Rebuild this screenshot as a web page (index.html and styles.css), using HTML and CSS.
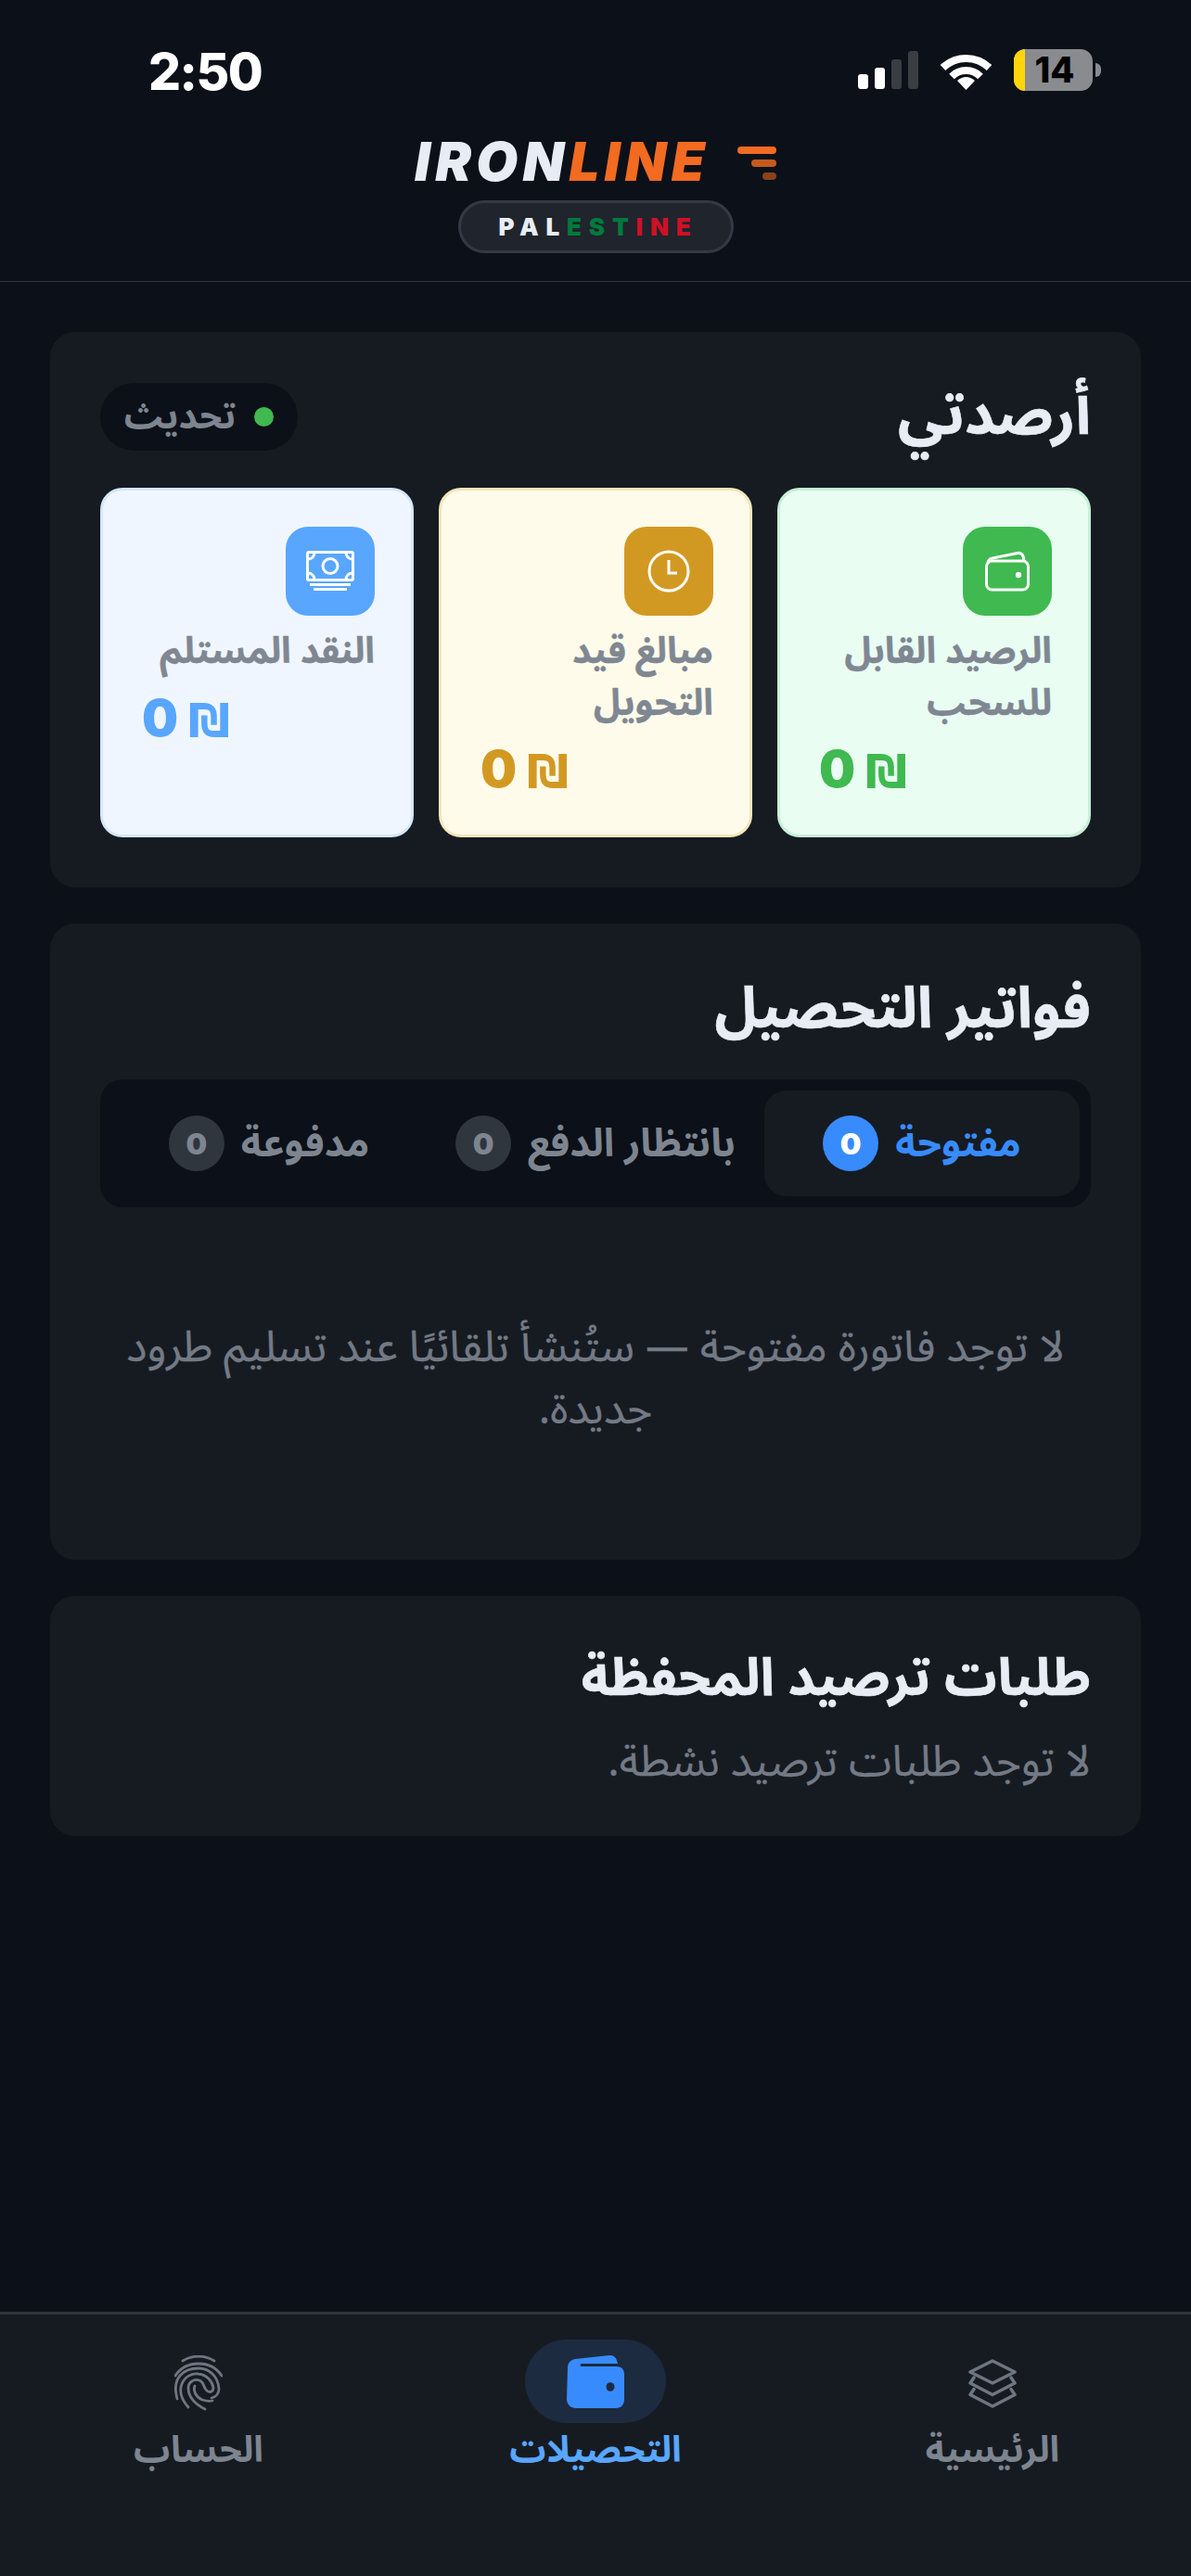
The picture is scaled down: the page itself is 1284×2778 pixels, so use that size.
FILE: index.html
```html
<!DOCTYPE html>
<html lang="ar" dir="rtl">
<head>
<meta charset="utf-8">
<title>Ironline</title>
<link rel="stylesheet" href="styles.css">
</head>
<body>
<div class="app">
  <div class="status" dir="ltr">
    <div class="time">2:50</div>
    <div class="status-icons">
      <div class="signal"><i class="b1"></i><i class="b2"></i><i class="b3"></i><i class="b4"></i></div>
      <svg class="wifi" width="57" height="42" viewBox="0 0 57 42"><path d="M3.5 18A36 36 0 0 1 53.500 18M13 27.500A22 22 0 0 1 44 27.500" fill="none" stroke="#fff" stroke-width="8"/><path d="M28.500 42L19 32Q28.500 24 38 32Z" fill="#fff"/></svg>
      <div class="battery"><span class="batt-fill"></span><span class="batt-num">14</span><span class="batt-nub"></span></div>
    </div>
  </div>
  <header class="brand" dir="ltr">
    <div class="logo">
      <div class="logo-text"><span class="iron">IRON</span><span class="line">LINE</span></div>
      <div class="logo-bars"><i class="lb1"></i><i class="lb2"></i><i class="lb3"></i></div>
    </div>
    <div class="country"><span class="c-w">PAL</span><span class="c-g">EST</span><span class="c-r">INE</span></div>
  </header>
  <main class="content">
    <section class="card">
      <div class="card-head">
        <h2 class="title">أرصدتي</h2>
        <div class="refresh"><span class="dot"></span><span class="refresh-text">تحديث</span></div>
      </div>
      <div class="balances">
        <div class="bal bal-green">
          <div class="bal-icon">
            <svg width="48" height="44" viewBox="0 0 48 44" fill="none" stroke="#fff" stroke-width="3" stroke-linejoin="round"><rect x="1.500" y="11" width="45" height="31" rx="6"/><path d="M3 14C3 10 5 8.500 8 8L35 2.500C39 1.800 41.500 4 42 11"/><circle cx="36" cy="26" r="3.200" fill="#fff" stroke="none"/></svg>
          </div>
          <div class="bal-label">الرصيد القابل للسحب</div>
          <div class="bal-amount" dir="ltr">0 <span class="shekel">₪</span></div>
        </div>
        <div class="bal bal-gold">
          <div class="bal-icon">
            <svg width="46" height="46" viewBox="0 0 46 46" fill="none" stroke="#fff" stroke-width="3"><circle cx="23" cy="23" r="21"/><path d="M23 11V25H32"/></svg>
          </div>
          <div class="bal-label">مبالغ قيد التحويل</div>
          <div class="bal-amount" dir="ltr">0 <span class="shekel">₪</span></div>
        </div>
        <div class="bal bal-blue">
          <div class="bal-icon">
            <svg width="52" height="44" viewBox="0 0 52 44" fill="none" stroke="#fff" stroke-width="3"><rect x="1.500" y="1.500" width="49" height="30" rx="1.500"/><circle cx="26" cy="16.500" r="8"/><path d="M9 2C9 6 6 9 2 9M43 2C43 6 46 9 50 9M9 31C9 27 6 24 2 24M43 31C43 27 46 24 50 24M4 36.500H48M8 41.500H44"/></svg>
          </div>
          <div class="bal-label">النقد المستلم</div>
          <div class="bal-amount" dir="ltr">0 <span class="shekel">₪</span></div>
        </div>
      </div>
    </section>

    <section class="card">
      <h2 class="title title-b">فواتير التحصيل</h2>
      <div class="tabs">
        <div class="tab tab-active"><span>مفتوحة</span><b class="count">0</b></div>
        <div class="tab"><span>بانتظار الدفع</span><b class="count">0</b></div>
        <div class="tab"><span>مدفوعة</span><b class="count">0</b></div>
      </div>
      <p class="empty">لا توجد فاتورة مفتوحة — ستُنشأ تلقائيًا عند تسليم طرود جديدة.</p>
    </section>

    <section class="card">
      <h2 class="title title-c">طلبات ترصيد المحفظة</h2>
      <p class="sub">لا توجد طلبات ترصيد نشطة.</p>
    </section>
  </main>
  <nav class="nav">
    <div class="nav-item">
      <div class="nav-icon">
        <svg width="52" height="53" viewBox="0 0 52 53" fill="none" stroke="#6e7681" stroke-width="3.500" stroke-linejoin="round" stroke-linecap="round"><path d="M26 2L50 14L26 26L2 14Z"/><path d="M6 20L2 26L26 38.500L50 26L46 20"/><path d="M6 32.500L2 38.500L26 51L50 38.500L46 32.500"/></svg>
      </div>
      <span>الرئيسية</span>
    </div>
    <div class="nav-item nav-active">
      <div class="nav-icon">
        <svg width="64" height="57" viewBox="0 0 64 57"><path d="M2 14C2 8 5 5 10 4L47 0C52 -.5 55 3 56 9H17C15 9 15 12 17 12H54C60 12 63 15 63 21V47C63 53 60 57 54 57H11C5 57 1 53 1 47Z" fill="#388bfd"/><ellipse cx="48" cy="34" rx="4.500" ry="4.800" fill="#1c2b40"/></svg>
      </div>
      <span>التحصيلات</span>
    </div>
    <div class="nav-item">
      <div class="nav-icon">
        <svg width="52" height="60" viewBox="0 0 52 60" fill="none" stroke="#6e7681" stroke-width="2.800" stroke-linecap="round"><path d="M9 6C19 -.5 33 -.5 43 6"/><path d="M1 22C7 13 16 9 26 9C36 9 45 13 51 22"/><path d="M3 47C0 36 1 28 6 22C11 16 19 14 26 14C37 14 47 22 48 36C48 41 45 45 40 46"/><path d="M15 56C8 48 5 39 8 31C11 23 19 19 26 20C35 21 41 28 42 35C42 40 37 41 34 37C31 33 32 29 27 27C21 25 15 29 15 35C15 45 23 53 33 58"/><path d="M22 33C20 38 23 45 30 48C33 49 37 50 41 49"/></svg>
      </div>
      <span>الحساب</span>
    </div>
  </nav>
</div>
</body>
</html>
```
FILE: styles.css
```css
* { box-sizing: border-box; }
html, body { margin: 0; padding: 0; background: #0d1117; }
body { font-family: "Noto Sans Arabic", "IBM Plex Sans Arabic", "DejaVu Sans", sans-serif; color: #e6edf3; }
.app { width: 1284px; height: 2778px; display: flex; flex-direction: column; background: #0c1018; overflow: hidden; }

.status { height: 125px; display: flex; justify-content: space-between; align-items: flex-start; padding: 0 106px 0 160px; flex: none; }
.time { font-family: Inter, sans-serif; font-weight: 800; font-size: 55px; line-height: 40px; margin-top: 57px; color: #fff; letter-spacing: -1.500px; }
.status-icons { display: flex; align-items: flex-start; margin-top: 53px; gap: 23px; }
.signal { display: flex; align-items: flex-end; gap: 7px; height: 43px; }
.signal i { display: block; width: 11px; border-radius: 3px; background: #fff; }
.signal .b1 { height: 16px; }
.signal .b2 { height: 23px; }
.signal .b3 { height: 32px; background: #3a3d42; }
.signal .b4 { height: 41px; background: #3a3d42; }
.wifi { margin-top: 2px; }
.battery { position: relative; width: 85px; height: 45px; border-radius: 13px; background: #8a8b8f; overflow: visible; display: flex; align-items: center; justify-content: center; }
.batt-fill { position: absolute; inset: 0 auto 0 0; width: 12px; background: #ffd60a; border-radius: 13px 0 0 13px; }
.batt-num { position: relative; font-family: Inter, sans-serif; font-weight: 800; font-size: 38px; line-height: 45px; color: #000; padding-left: 3px; }
.batt-nub { position: absolute; left: 88px; top: 15px; width: 6px; height: 15px; background: #8a8b8f; border-radius: 0 8px 8px 0; }

.brand { flex: none; height: 179px; border-bottom: 1px solid #2f343d; display: flex; flex-direction: column; align-items: center; }
.logo { display: flex; align-items: flex-start; gap: 30px; height: 91px; padding-top: 19px; }
.logo-text { font-family: Inter, sans-serif; font-weight: 900; font-style: italic; font-size: 58px; line-height: 60px; letter-spacing: 5.300px; }
.iron { color: #e8edf5; }
.line { color: #f26b21; }
.logo-bars { display: flex; flex-direction: column; align-items: flex-end; gap: 6px; margin-top: 14px; width: 42px; }
.logo-bars i { display: block; height: 8px; border-radius: 4px; background: #f26b21; }
.lb1 { width: 42px; }
.lb2 { width: 27px; opacity: .8; }
.lb3 { width: 15px; opacity: .55; }
.country { width: 297px; height: 57px; border: 3px solid #343a44; border-radius: 29px; background: #20242c; text-align: center; font-family: Inter, sans-serif; font-weight: 900; font-size: 26px; line-height: 51px; letter-spacing: 7.800px; padding-left: 6px; }
.c-w { color: #e8edf5; }
.c-g { color: #007a3d; }
.c-r { color: #ce1126; }

.content { flex: 1; padding: 54px 54px 0; display: flex; flex-direction: column; gap: 39px; }
.card { background: #161b22; border-radius: 27px; padding: 54px; }
.card-head { display: flex; justify-content: space-between; align-items: center; height: 74px; margin-bottom: 40px; }
.title { margin: 0; font-size: 62px; font-weight: 700; color: #e8edf5; line-height: 74px; -webkit-text-stroke: .6px #e8edf5; }
.title-b { font-size: 61.300px; line-height: 78px; margin-bottom: 36px; }
.title-c { font-size: 56.300px; line-height: 72px; margin-bottom: 27px; }
.refresh { height: 73px; width: 213px; border-radius: 37px; background: #0c1018; display: flex; align-items: center; justify-content: center; gap: 20px; color: #7d8590; font-size: 39px; font-weight: 700; }
.dot { width: 21px; height: 21px; border-radius: 50%; background: #3fb950; }

.balances { display: grid; grid-template-columns: repeat(3, 1fr); gap: 27px; }
.bal { border: 3px solid; border-radius: 24px; padding: 39px; height: 377px; }
.bal-icon { width: 96px; height: 96px; border-radius: 24px; display: flex; align-items: center; justify-content: center; margin-bottom: 11px; }
.bal-label { color: #7f8792; font-size: 39px; font-weight: 700; line-height: 55.600px; -webkit-text-stroke: .4px #7f8792; }
.bal-amount { font-family: Inter, "DejaVu Sans", sans-serif; font-weight: 900; font-size: 55px; line-height: 66px; margin-top: 10px; text-align: left; padding-left: 3px; }
.shekel { font-family: "DejaVu Sans", sans-serif; font-weight: 700; font-size: 50px; }
.bal-green { background: #e9fdf2; border-color: #c6f0d6; }
.bal-green .bal-icon { background: #3fb950; }
.bal-green .bal-amount { color: #3fb950; }
.bal-gold { background: #fffbeb; border-color: #f5e6bb; }
.bal-gold .bal-icon { background: #d29922; }
.bal-gold .bal-amount { color: #d29922; }
.bal-blue { background: #f0f6ff; border-color: #d6e6ff; }
.bal-blue .bal-icon { background: #58a6ff; }
.bal-blue .bal-amount { color: #58a6ff; }

.tabs { height: 138px; padding: 12px; border-radius: 24px; background: #0c1018; display: grid; grid-template-columns: repeat(3, 1fr); gap: 12px; }
.tab { display: flex; align-items: center; justify-content: center; gap: 18px; border-radius: 24px; color: #7d8590; font-size: 42px; font-weight: 700; }
.tab-active { background: #161b22; color: #388bfd; }
.count { width: 60px; height: 60px; border-radius: 50%; background: #30363d; color: #7d8590; display: flex; align-items: center; justify-content: center; font-family: Inter, sans-serif; font-weight: 900; font-size: 32px; }
.tab-active .count { background: #388bfd; color: #fff; }

.empty { margin: 118px 0 74px; text-align: center; color: #737a85; font-size: 46.600px; line-height: 67px; -webkit-text-stroke: .3px #737a85; }
.sub { margin: 0; color: #737a85; font-size: 46.600px; line-height: 52px; -webkit-text-stroke: .3px #737a85; }

.nav { flex: none; height: 285px; background: #161b22; border-top: 3px solid #2f343d; display: grid; grid-template-columns: repeat(3, 1fr); padding-top: 27px; }
.nav-item { display: flex; flex-direction: column; align-items: center; color: #7d8590; font-size: 39px; font-weight: 700; }
.nav-item span { line-height: 60px; }
.nav-icon { width: 152px; height: 90px; border-radius: 45px; display: flex; align-items: center; justify-content: center; padding-top: 4px; }
.nav-active { color: #58a6ff; }
.nav-active .nav-icon { background: #1c2b40; padding-top: 0; }
```
